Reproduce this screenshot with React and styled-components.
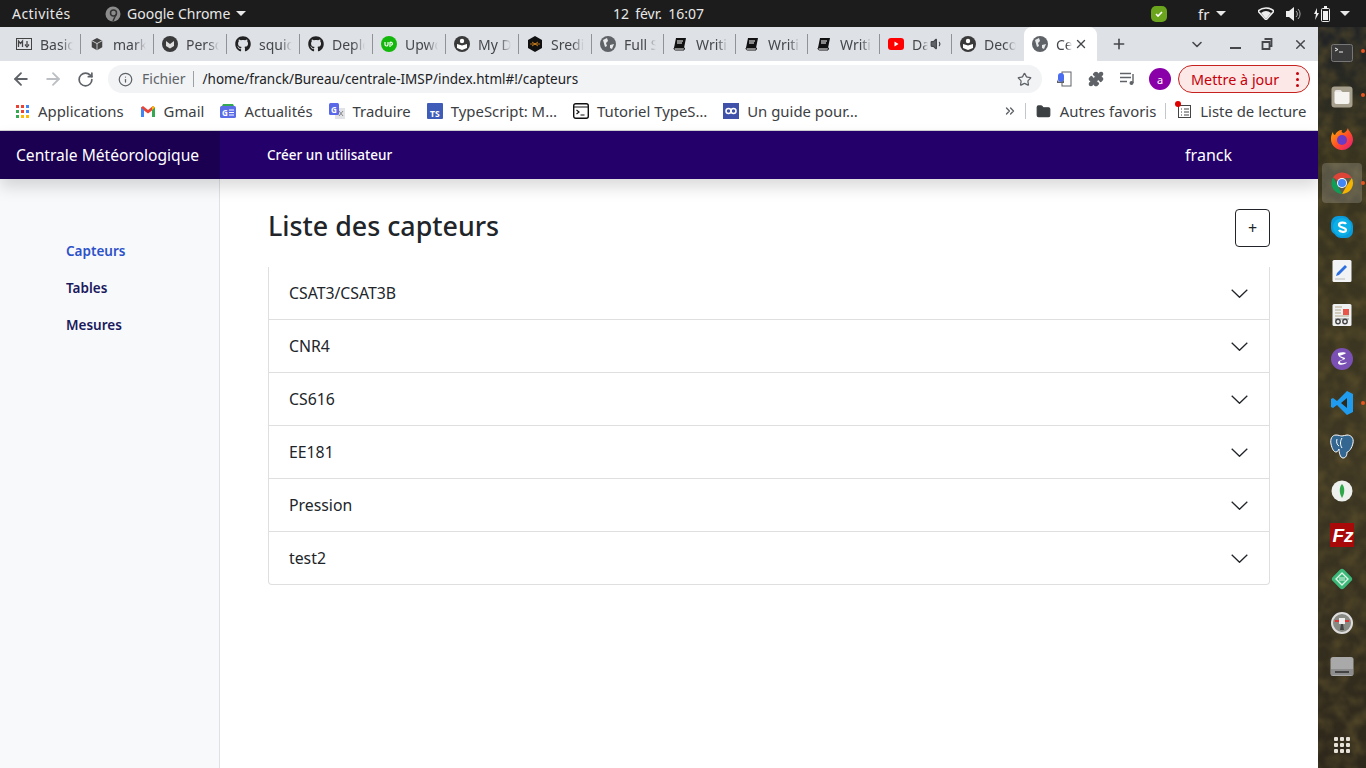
import React from "react";
import styled, { createGlobalStyle } from "styled-components";
import { ArrowLeft, ArrowRight, RotateCw, Info, Star, Puzzle, X, Plus, ChevronDown, ChevronsRight, Folder, Volume1 } from "lucide-react";
import { FaGithub } from "react-icons/fa";

const Global = createGlobalStyle`
  html, body { margin: 0; padding: 0; width: 1366px; height: 768px; overflow: hidden; background: #fff; }
  * { box-sizing: border-box; }
  body { font-family: "Noto Sans", "Liberation Sans", sans-serif; }
`;

const Screen = styled.div`display:flex;flex-direction:column;width:1366px;height:768px;overflow:hidden;`;
const TopBar = styled.header`display:flex;align-items:center;height:27px;flex:none;background:#1c1c1c;color:#e8e8e8;font-size:14px;padding-left:12px;`;
const Activities = styled.span`width:93px;flex:none;letter-spacing:.45px;`;
const AppMenu = styled.div`display:flex;align-items:center;gap:6px;width:508px;flex:none;`;
const Clock = styled.span`width:538px;flex:none;word-spacing:2.5px;`;
const Tray = styled.div`display:flex;align-items:center;flex:none;`;
const Caret = styled.span`display:inline-block;width:0;height:0;border-left:5px solid transparent;border-right:5px solid transparent;border-top:5px solid #e8e8e8;flex:none;margin-left:${p=>p.$ml||0}px;`;
const Lang = styled.span`margin-left:31px;margin-right:7px;font-size:15px;`;

const Desk = styled.div`display:flex;flex:1;min-height:0;`;
const Browser = styled.div`display:flex;flex-direction:column;width:1318px;flex:none;`;

const TabStrip = styled.div`display:flex;height:34px;flex:none;background:#dee1e6;padding-left:8px;`;
const Tab = styled.div`display:flex;align-items:center;width:${p=>p.$w}px;flex:none;padding-left:8px;position:relative;color:#45474b;font-size:14px;
  ${p=>p.$sep?`&::after{content:"";position:absolute;right:0;top:7px;height:20px;width:1px;background:#8f9296;}`:""}`;
const ActiveTab = styled(Tab)`background:#fff;border-radius:8px 8px 0 0;color:#45474b;padding-left:8px;`;
const TabIcon = styled.span`display:flex;width:16px;height:16px;flex:none;margin-right:8px;align-items:center;justify-content:center;`;
const TabLabel = styled.span`overflow:hidden;white-space:nowrap;flex:1;min-width:0;margin-right:${p=>p.$tight?2:8}px;-webkit-mask-image:linear-gradient(90deg,#000 65%,transparent);mask-image:linear-gradient(90deg,#000 65%,transparent);`;
const TabControls = styled.div`display:flex;align-items:center;flex:1;color:#45474b;`;
const Ctl = styled.span`display:flex;align-items:center;justify-content:center;width:16px;margin-left:${p=>p.$ml}px;flex:none;`;
const MinBar = styled.i`display:block;width:11px;height:2px;background:#45474b;margin-top:7px;`;

const Toolbar = styled.div`display:flex;align-items:center;height:33px;flex:none;background:#fff;padding:3px 8px 0 11px;color:#5f6368;`;
const NavBtn = styled.span`display:flex;justify-content:center;width:20px;margin-right:12px;flex:none;color:${p=>p.$dim?"#bcc0c4":"#5f6368"};`;
const Omni = styled.div`display:flex;align-items:center;width:934px;height:28px;margin-left:1px;border-radius:14px;background:#f1f3f4;padding:0 10px;font-size:14px;flex:none;`;
const OriginLabel = styled.span`color:#5f6368;margin-left:9px;padding-right:7px;border-right:1px solid #9aa0a6;line-height:16px;`;
const Url = styled.span`color:#202124;margin-left:9px;flex:1;font-size:13.5px;`;
const Avatar = styled.span`display:flex;align-items:center;justify-content:center;width:22px;height:22px;border-radius:50%;background:#8a00a8;color:#fff;font-size:11px;margin-left:13px;flex:none;`;
const UpdatePill = styled.div`display:flex;align-items:center;justify-content:space-between;width:132px;height:28px;margin-left:7px;border-radius:14px;border:1px solid #c5221f;background:#fce8e6;color:#c5000b;font-size:14.4px;padding:0 10px 0 12px;flex:none;`;
const Dots = styled.span`display:flex;flex-direction:column;gap:3px;`;
const Dot = styled.i`display:block;width:3px;height:3px;border-radius:50%;background:#c5000b;`;
const TbIcon = styled.span`display:flex;margin-left:${p=>p.$ml}px;flex:none;`;

const Bookmarks = styled.div`display:flex;align-items:center;height:37px;flex:none;background:#fff;border-bottom:1px solid #d0d2d5;padding:0 0 2px 14px;font-size:14.9px;color:#3c4043;`;
const Bm = styled.div`display:flex;align-items:center;flex:none;margin-right:${p=>p.$mr??16}px;`;
const BmIcon = styled.span`display:flex;width:16px;height:16px;margin-right:8px;flex:none;position:relative;align-items:center;justify-content:center;`;
const BmSep = styled.span`width:1px;height:16px;background:#c4c6c9;margin:0 10px 0 ${p=>p.$ml}px;flex:none;`;
const RedBadge = styled.i`position:absolute;left:-1px;top:-2px;width:6px;height:6px;border-radius:50%;background:#e00000;`;
const More = styled.span`display:flex;margin-left:${p=>p.$ml}px;color:#5f6368;flex:none;`;

const Page = styled.div`display:flex;flex-direction:column;flex:1;min-height:0;background:#fff;`;
const Navbar = styled.nav`display:flex;align-items:center;height:48px;flex:none;background:#24006a;color:#fff;position:relative;z-index:2;box-shadow:0 8px 16px rgba(0,0,0,.15);`;
const Brand = styled.div`display:flex;align-items:center;width:220px;height:100%;padding-left:16px;background:#1b0052;font-size:15.6px;flex:none;`;
const NavLink = styled.a`margin-left:47px;font-size:13.5px;font-weight:500;flex:1;`;
const UserName = styled.span`font-size:16px;margin-right:86px;`;
const Body = styled.div`display:flex;flex:1;min-height:0;`;
const Sidebar = styled.aside`display:flex;flex-direction:column;width:220px;flex:none;background:#f8f9fa;border-right:1px solid #dee2e6;padding:62px 0 0 66px;gap:17px;`;
const SideLink = styled.a`font-size:13.5px;font-weight:600;line-height:20px;color:${p=>p.$active?"#2c52c9":"#1a1a5e"};`;
const Main = styled.main`flex:1;padding:30px 48px 0 48px;min-width:0;`;
const Heading = styled.div`display:flex;align-items:center;justify-content:space-between;height:38px;margin-bottom:20px;`;
const Title = styled.h1`margin:0 0 4px;font-size:26.8px;font-weight:550;color:#212529;line-height:34px;`;
const AddBtn = styled.button`width:35px;height:38px;background:#fff;border:1px solid #212529;border-radius:4px;color:#212529;font:16px "Noto Sans",sans-serif;padding:0;`;
const Accordion = styled.div`border:1px solid #dfdfdf;border-top:none;border-radius:0 0 4px 4px;`;
const Row = styled.div`display:flex;align-items:center;justify-content:space-between;height:${p=>p.$last?52:53}px;padding:0 21px 0 20px;font-size:15.8px;color:#212529;border-bottom:${p=>p.$last?"none":"1px solid #dfdfdf"};`;

const Dock = styled.aside`position:relative;display:flex;flex-direction:column;align-items:center;width:48px;flex:none;background:#2e2b20;overflow:hidden;padding-top:4px;`;
const Wallpaper = styled.svg`position:absolute;inset:0;width:100%;height:100%;`;
const DockSlot = styled.div`position:relative;display:flex;align-items:center;justify-content:center;width:40px;height:40px;margin-bottom:4px;flex:none;border-radius:4px;background:${p=>p.$on?"rgba(255,255,255,.18)":"transparent"};`;
const DockDot = styled.i`position:absolute;right:-3px;top:50%;margin-top:-2px;width:4px;height:4px;border-radius:50%;background:#e9541f;`;
const DockGrid = styled.div`position:relative;display:grid;grid-template-columns:repeat(3,4px);gap:2px;margin-top:auto;margin-bottom:15px;`;
const GridDot = styled.i`display:block;width:4px;height:4px;border-radius:1px;background:#e6e2d8;`;
const AppGrid = styled.div`display:grid;grid-template-columns:repeat(3,3px);gap:2px;`;
const AppCell = styled.i`display:block;width:3px;height:3px;background:${p=>p.$c};`;

const Disc = ({ c = "#3c3c3c", size = 16, children }) => (
  <svg width={size} height={size} viewBox="0 0 16 16"><circle cx="8" cy="8" r="8" fill={c} />{children}</svg>
);
const BookI = () => (
  <svg width="16" height="16" viewBox="0 0 16 16"><path d="M4 2h10l-2 10H2z" fill="#111" /><path d="M2 12c0 2 1 2 2 2h8l.5-2z" fill="#fff" stroke="#111" /><path d="M5 5h6M5 7h5" stroke="#fff" /></svg>
);
const Globe = ({ c = "#5f6368" }) => (
  <svg width="16" height="16" viewBox="0 0 16 16"><circle cx="8" cy="8" r="8" fill={c} /><path d="M3 4l4-2 1 3-2 2 1 3-2 1zM10 9l4-1-2 5-2-1z" fill="#fff" opacity=".85" /></svg>
);
const Person = () => <Disc c="#3a3a3a"><circle cx="8" cy="5" r="2.2" fill="#fff" /><path d="M3 8l5 1.5L13 8v4l-5 2-5-2z" fill="#fff" /></Disc>;

const tabs = [
  { w: 73, label: "Basic", icon: <svg width="16" height="12" viewBox="0 0 16 12"><rect x=".5" y=".5" width="15" height="11" fill="none" stroke="#444" /><path d="M2.5 9V3l2 2.5 2-2.500v6M11 3v4M9 6.500l2 2.500 2-2.500" fill="none" stroke="#444" strokeWidth="1.300" /></svg> },
  { w: 73, label: "mark", icon: <svg width="14" height="14" viewBox="0 0 16 16"><path d="M8 1l6 3.200v7.600L8 15l-6-3.200V4.200z" fill="#444" /><path d="M2 4.200l6 3.300 6-3.300M8 7.500V15" stroke="#ddd" fill="none" /></svg> },
  { w: 73, label: "Perso", icon: <Disc c="#3a3a3a"><path d="M4 5l4 3 4-3v5l-4 2.500L4 10z" fill="#ddd" /></Disc> },
  { w: 73, label: "squid", icon: <FaGithub size={16} color="#222" /> },
  { w: 73, label: "Deplo", icon: <FaGithub size={16} color="#222" /> },
  { w: 73, label: "Upwo", icon: <Disc c="#14b80c"><path d="M4 6v2.500a1.500 1.500 0 003 0V6M9 11V6.500a1.500 1.500 0 111 2.700" stroke="#fff" fill="none" strokeWidth="1.200" /></Disc> },
  { w: 73, label: "My D", icon: <Person /> },
  { w: 73, label: "Sredi", icon: <svg width="16" height="16" viewBox="0 0 16 16"><path d="M8 0l7 4v8l-7 4-7-4V4z" fill="#111" /><path d="M3 8h10M5 6l6 4M11 6l-6 4" stroke="#e08a1e" strokeWidth=".8" /></svg> },
  { w: 72, label: "Full S", icon: <Globe /> },
  { w: 72, label: "Writi", icon: <BookI /> },
  { w: 72, label: "Writi", icon: <BookI /> },
  { w: 72, label: "Writi", icon: <BookI /> },
  { w: 72, label: "Da", audio: true, icon: <svg width="16" height="12" viewBox="0 0 16 12"><rect width="16" height="12" rx="3" fill="#f00" /><path d="M6.500 3.500l4 2.500-4 2.500z" fill="#fff" /></svg> },
  { w: 72, label: "Deco", icon: <Person /> },
];

const bookmarks = [
  { label: "Applications", icon: <AppGrid>{["#ea4335","#ea4335","#4285f4","#34a853","#ea4335","#4285f4","#34a853","#fbbc04","#fbbc04"].map((c,i)=><AppCell key={i} $c={c}/>)}</AppGrid> },
  { label: "Gmail", icon: <svg width="14" height="11" viewBox="0 0 14 11"><path d="M0 1.500V11h3V4.500l4 3 4-3V11h3V1.500L12 0 7 4 2 0z" fill="#ea4335" /><path d="M0 11V1.500L3 4v7z" fill="#4285f4" /><path d="M11 11V4l3-2.500V11z" fill="#34a853" /><path d="M11 4l3-2.500L12 0l-1 1z" fill="#fbbc04" /></svg> },
  { label: "Actualités", icon: <svg width="16" height="16" viewBox="0 0 16 16"><path d="M2 3l1-2h10l1 2z" fill="#34a853" /><rect y="3" width="16" height="12" rx="1.500" fill="#5b6ee8" /><text x="2" y="12.500" fontSize="8" fontWeight="700" fill="#fff" fontFamily="Noto Sans">G</text><path d="M9 7h5M9 9.500h5M9 12h5" stroke="#fff" /></svg> },
  { label: "Traduire", icon: <svg width="16" height="16" viewBox="0 0 16 16"><rect x="6" y="5" width="10" height="11" fill="#e2e3e6" /><rect width="10" height="12" rx="1.500" fill="#5b68e8" /><text x="2" y="9.500" fontSize="8" fontWeight="700" fill="#fff" fontFamily="Noto Sans">G</text><path d="M10 8l4 5M14 8l-4 5" stroke="#888" /></svg> },
  { label: "TypeScript: M…", icon: <svg width="16" height="16" viewBox="0 0 16 16"><rect width="16" height="16" rx="1" fill="#3f5cb8" /><text x="3" y="14" fontSize="8.500" fontWeight="700" fill="#fff" fontFamily="Noto Sans">TS</text></svg> },
  { label: "Tutoriel TypeS…", icon: <svg width="16" height="16" viewBox="0 0 16 16"><rect x=".7" y=".7" width="14.600" height="14.600" rx="2" fill="#fff" stroke="#111" strokeWidth="1.400" /><path d="M1 4h14" stroke="#111" /><path d="M3.500 7l2.500 2-2.500 2M7.500 12h4" stroke="#111" fill="none" strokeWidth="1.200" /></svg> },
  { label: "Un guide pour…", icon: <svg width="16" height="16" viewBox="0 0 16 16"><rect width="16" height="16" fill="#3f51a8" /><circle cx="5.500" cy="8" r="2.500" fill="none" stroke="#fff" strokeWidth="1.500" /><circle cx="10.500" cy="8" r="2.500" fill="none" stroke="#fff" strokeWidth="1.500" /></svg> },
];

const Chevron = () => <svg width="17" height="9" viewBox="0 0 17 9"><path d="M.7.7l7.800 7.600L16.300.7" fill="none" stroke="#212529" strokeWidth="1.300" /></svg>;

const sensors = ["CSAT3/CSAT3B", "CNR4", "CS616", "EE181", "Pression", "test2"];

const dockIcons = [
  { dot: true, el: <svg width="22" height="22" viewBox="0 0 22 22"><rect x=".5" y="4.500" width="21" height="17" rx="2" fill="#3b3b3b" stroke="#777" /><path d="M4 8l3 1.500L4 11M8 12h4" stroke="#eee" fill="none" /></svg> },
  { dot: true, el: <svg width="22" height="26" viewBox="0 0 22 26"><rect x=".5" y="4.500" width="21" height="21" rx="3" fill="#a8a08e" /><path d="M3.500 10h15v10a2 2 0 01-2 2h-11a2 2 0 01-2-2z" fill="#f5f3ef" /><path d="M3.500 10a2 2 0 012-2h4l2 2z" fill="#e8e6e2" /></svg> },
  { el: <svg width="24" height="24" viewBox="0 0 24 24"><defs><linearGradient id="ff" x1="0" y1="0" x2="1" y2="1"><stop offset="0" stopColor="#ffb000" /><stop offset=".55" stopColor="#ff4a2a" /><stop offset="1" stopColor="#e31587" /></linearGradient></defs><path d="M18 1c0 3 5 5 5 12a11 11 0 11-22-2c0-2 1-5 2-6 0 2 1 3 2 3 1-3 4-5 7-5-1 2 0 3 2 3 2-1 3-3 4-5z" fill="url(#ff)" /><circle cx="12" cy="13" r="5" fill="#6a3bc4" /></svg> },
  { on: true, dot: true, el: <svg width="22" height="22" viewBox="0 0 22 22"><path d="M11 11L2 5.500A11 11 0 0120.800 6H11z" fill="#db4437" /><path d="M11 22A11 11 0 012 5.500L7 14z" fill="#0f9d58" /><path d="M20.800 6A11 11 0 0111 22l4.500-8z" fill="#f4b400" /><circle cx="11" cy="11" r="5" fill="#fff" /><circle cx="11" cy="11" r="4" fill="#4285f4" /></svg> },
  { el: <svg width="22" height="22" viewBox="0 0 22 22"><rect x="0" y="0" width="19" height="19" rx="7" fill="#0a9bdc" /><rect x="3" y="3" width="19" height="19" rx="7" fill="#0a9bdc" /><circle cx="11" cy="11" r="9" fill="#0db0e6" /><path d="M15 8c-1-2-7-2-7 1 0 3 7 2 7 5 0 3-6 2-7 0" fill="none" stroke="#fff" strokeWidth="2.200" /></svg> },
  { el: <svg width="22" height="22" viewBox="0 0 22 22"><rect width="19" height="22" x="1.500" rx="1.500" fill="#f2f3f4" /><path d="M5 16l1-3 8-8 2 2-8 8z" fill="#2c6fe0" /><path d="M4 19h10" stroke="#bbb" /></svg> },
  { el: <svg width="22" height="22" viewBox="0 0 22 22"><rect x="1.500" width="19" height="22" rx="1.500" fill="#eef0f1" /><path d="M4 3h7M4 6h6M4 9h6M4 12h14" stroke="#b5a78a" /><rect x="12" y="5" width="6" height="6" fill="#e8564a" /><path d="M4 15h14" stroke="#888" /><circle cx="7" cy="17.500" r="2.200" fill="none" stroke="#444" strokeWidth="1.400" /><circle cx="14" cy="17.500" r="2.200" fill="none" stroke="#444" strokeWidth="1.400" /></svg> },
  { el: <svg width="22" height="22" viewBox="0 0 22 22"><circle cx="11" cy="11" r="11" fill="#7a50b4" /><path d="M7 5c3-1 7-1 8 0-2 2-6 2-6 3 0 1 6 1 5 3-1 1-5 1-5 3s5 1 7 0c-1 3-9 4-9 1 0-3 5-3 5-4s-6-2-5-6z" fill="#fff" /></svg> },
  { dot: true, el: <svg width="22" height="24" viewBox="0 0 22 24"><path d="M16 0l6 3v18l-6 3L6 14l-4 3-2-1V8l2-1 4 3z" fill="#1f9cf0" /><path d="M16 7v10l-6-5z" fill="#2d2a1e" /></svg> },
  { el: <svg width="24" height="26" viewBox="0 0 24 26"><path d="M6 1C2 1 0 5 1 10s3 8 5 8 2-2 3-3c0 3 1 9 4 9s4-3 4-6c2 0 5-4 6-9s-2-8-6-8c-2 0-3 1-5 1S9 1 6 1z" fill="#336791" stroke="#fff" /><path d="M12 4c-2 3-2 7 0 10M7 5c-1 3 0 6 2 7" stroke="#fff" fill="none" /></svg> },
  { el: <svg width="22" height="22" viewBox="0 0 22 22"><circle cx="11" cy="11" r="10.500" fill="#eef0ee" /><path d="M11 4c3 3 3 9 0 14-3-5-3-11 0-14z" fill="#2fa84a" /></svg> },
  { el: <svg width="24" height="24" viewBox="0 0 24 24"><rect width="24" height="24" fill="#a80a0a" /><text x="2.500" y="18.500" fontSize="19" fontWeight="700" fontStyle="italic" fill="#fff" fontFamily="Liberation Sans">Fz</text></svg> },
  { el: <svg width="24" height="24" viewBox="0 0 24 24"><rect x="4" y="4" width="16" height="16" rx="3" transform="rotate(45 12 12)" fill="#3cb878" /><path d="M12 6l6 6-6 6-6-6z" fill="none" stroke="#dff5e8" strokeWidth="1.400" /><path d="M9 11h6M9 13h6" stroke="#dff5e8" /></svg> },
  { el: <svg width="22" height="22" viewBox="0 0 22 22"><circle cx="11" cy="11" r="10" fill="#8a8a84" stroke="#ddd" strokeWidth="2" /><path d="M4 8h14v2H4z" fill="#d33" /><rect x="8" y="6" width="6" height="6" fill="#eee" /><path d="M10 12h2l1 6H9z" fill="#444" /></svg> },
  { el: <svg width="24" height="20" viewBox="0 0 24 20"><rect width="23" height="19" x=".5" rx="2.500" fill="#a9a9a9" /><rect x="1" y="12" width="22" height="6" fill="#8d8d8d" /><rect x="5" y="14" width="14" height="2" fill="#444" /></svg> },
];

export default function App() {
  return (
    <>
      <Global />
      <Screen>
        <TopBar>
          <Activities>Activités</Activities>
          <AppMenu>
            <svg width="16" height="16" viewBox="0 0 16 16"><circle cx="8" cy="8" r="7.500" fill="#8c8c8c" /><circle cx="8.500" cy="7" r="3" fill="none" stroke="#333" strokeWidth="1.500" /><path d="M11 8.500L8 15" stroke="#333" strokeWidth="1.500" /></svg>
            Google Chrome <Caret />
          </AppMenu>
          <Clock>12 févr. 16:07</Clock>
          <Tray>
            <svg width="16" height="16" viewBox="0 0 16 16"><rect width="16" height="16" rx="5" fill="#6aa51d" /><path d="M5 8l2 2 4-4" stroke="#fff" strokeWidth="1.600" fill="none" /></svg>
            <Lang>fr</Lang>
            <Caret />
            <TbIcon $ml={32}><svg width="16" height="13" viewBox="0 0 16 13"><path d="M0 4a12 12 0 0116 0l-8 9z" fill="none" stroke="#eee" strokeWidth="1.500" /><path d="M3 6a8 8 0 0110 0l-5 6z" fill="#eee" /></svg></TbIcon>
            <TbIcon $ml={12}><svg width="16" height="14" viewBox="0 0 16 14"><path d="M0 4h3l5-4v14l-5-4H0z" fill="#eee" /><path d="M10 4a4 4 0 010 6M12 2a7 7 0 010 10" stroke="#aaa" fill="none" /></svg></TbIcon>
            <TbIcon $ml={12}><svg width="16" height="16" viewBox="0 0 16 16"><path d="M3 2L0 8h2l-1 6 4-7H3z" fill="#eee" /><rect x="7.500" y="2.500" width="8" height="13" rx="1" fill="none" stroke="#eee" /><rect x="9" y="5" width="5" height="9" fill="#eee" /><rect x="10" y="0" width="3" height="2" fill="#eee" /></svg></TbIcon>
            <Caret $ml={10} />
          </Tray>
        </TopBar>
        <Desk>
          <Browser>
            <TabStrip>
              {tabs.map((t, i) => (
                <Tab key={i} $w={t.w} $sep={i < tabs.length - 1}>
                  <TabIcon>{t.icon}</TabIcon>
                  <TabLabel $tight={t.audio}>{t.label}</TabLabel>
                  {t.audio && <Volume1 size={14} style={{ marginRight: 8, flex: "none" }} fill="#5f6368" />}
                </Tab>
              ))}
              <ActiveTab $w={73}>
                <TabIcon><Globe /></TabIcon>
                <TabLabel $tight>Ce</TabLabel>
                <X size={14} strokeWidth={2.4} style={{ marginRight: 9, flex: "none" }} />
              </ActiveTab>
              <TabControls>
                <Ctl $ml={14}><Plus size={18} strokeWidth={2.4} /></Ctl>
                <Ctl $ml={62}><ChevronDown size={17} strokeWidth={2.4} /></Ctl>
                <Ctl $ml={22}><MinBar /></Ctl>
                <Ctl $ml={16}><svg width="12" height="12" viewBox="0 0 12 12"><path d="M3.500 1h7v7h-2M1.500 4h7v7h-7z" fill="none" stroke="#45474b" strokeWidth="1.800" /></svg></Ctl>
                <Ctl $ml={17}><X size={15} strokeWidth={2.4} /></Ctl>
              </TabControls>
            </TabStrip>
            <Toolbar>
              <NavBtn><ArrowLeft size={20} strokeWidth={2.2} /></NavBtn>
              <NavBtn $dim><ArrowRight size={20} strokeWidth={2.2} /></NavBtn>
              <NavBtn><RotateCw size={17} strokeWidth={2.4} /></NavBtn>
              <Omni>
                <Info size={15} color="#5f6368" />
                <OriginLabel>Fichier</OriginLabel>
                <Url>/home/franck/Bureau/centrale-IMSP/index.html#!/capteurs</Url>
                <Star size={15} color="#5f6368" strokeWidth={2} />
              </Omni>
              <TbIcon $ml={14}><svg width="16" height="16" viewBox="0 0 16 16"><rect x="6" y="1" width="9" height="14" fill="#fff" stroke="#5f6368" /><rect x="2" y="2" width="6" height="9" rx="3" fill="#4a6cf0" /><path d="M1 8c0 4 7 4 7 0v4H1z" fill="#5f6368" /></svg></TbIcon>
              <TbIcon $ml={16}><Puzzle size={16} fill="#5f6368" color="#5f6368" /></TbIcon>
              <TbIcon $ml={16}><svg width="16" height="14" viewBox="0 0 16 14"><path d="M0 1.500h11M0 5.500h11M0 9.500h7" stroke="#5f6368" strokeWidth="1.400" /><path d="M13 2v9" stroke="#5f6368" strokeWidth="1.400" /><circle cx="11.500" cy="11" r="2" fill="#5f6368" /></svg></TbIcon>
              <Avatar>a</Avatar>
              <UpdatePill>
                Mettre à jour
                <Dots><Dot /><Dot /><Dot /></Dots>
              </UpdatePill>
            </Toolbar>
            <Bookmarks>
              {bookmarks.map((b) => (
                <Bm key={b.label}><BmIcon>{b.icon}</BmIcon>{b.label}</Bm>
              ))}
              <More $ml={129}><ChevronsRight size={14} strokeWidth={2.4} /></More>
              <BmSep $ml={8} />
              <Bm $mr={0}><BmIcon><Folder size={15} fill="#3c4043" color="#3c4043" /></BmIcon>Autres favoris</Bm>
              <BmSep $ml={9} />
              <Bm $mr={0}><BmIcon><svg width="16" height="16" viewBox="0 0 16 16"><rect x="2.500" y="2.500" width="12" height="12" fill="none" stroke="#444" /><path d="M5 6h1M5 9h1M5 12h1M8 6h5M8 9h5M8 12h5" stroke="#444" /></svg><RedBadge /></BmIcon>Liste de lecture</Bm>
            </Bookmarks>
            <Page>
              <Navbar>
                <Brand>Centrale Météorologique</Brand>
                <NavLink>Créer un utilisateur</NavLink>
                <UserName>franck</UserName>
              </Navbar>
              <Body>
                <Sidebar>
                  <SideLink $active>Capteurs</SideLink>
                  <SideLink>Tables</SideLink>
                  <SideLink>Mesures</SideLink>
                </Sidebar>
                <Main>
                  <Heading>
                    <Title>Liste des capteurs</Title>
                    <AddBtn>+</AddBtn>
                  </Heading>
                  <Accordion>
                    {sensors.map((s, i) => (
                      <Row key={s} $last={i === sensors.length - 1}>{s}<Chevron /></Row>
                    ))}
                  </Accordion>
                </Main>
              </Body>
            </Page>
          </Browser>
          <Dock>
            <Wallpaper aria-hidden="true">
              <defs>
                <linearGradient id="wpg" x1="0" y1="0" x2="0" y2="1">
                  <stop offset="0" stopColor="#1f2226" />
                  <stop offset=".18" stopColor="#38341f" />
                  <stop offset=".6" stopColor="#3d3723" />
                  <stop offset="1" stopColor="#2e281c" />
                </linearGradient>
              </defs>
              <filter id="wp" colorInterpolationFilters="sRGB">
                <feTurbulence type="fractalNoise" baseFrequency="0.07" numOctaves="4" seed="7" />
                <feColorMatrix values="0 0 0 0 .36  0 0 0 0 .31  0 0 0 0 .17  1.600 0 0 0 -.6" />
                <feGaussianBlur stdDeviation=".8" />
              </filter>
              <rect width="100%" height="100%" fill="url(#wpg)" />
              <rect width="100%" height="100%" filter="url(#wp)" />
            </Wallpaper>
            {dockIcons.map((d, i) => (
              <DockSlot key={i} $on={d.on}>{d.el}{d.dot && <DockDot />}</DockSlot>
            ))}
            <DockGrid>{Array.from({ length: 9 }).map((_, i) => <GridDot key={i} />)}</DockGrid>
          </Dock>
        </Desk>
      </Screen>
    </>
  );
}
